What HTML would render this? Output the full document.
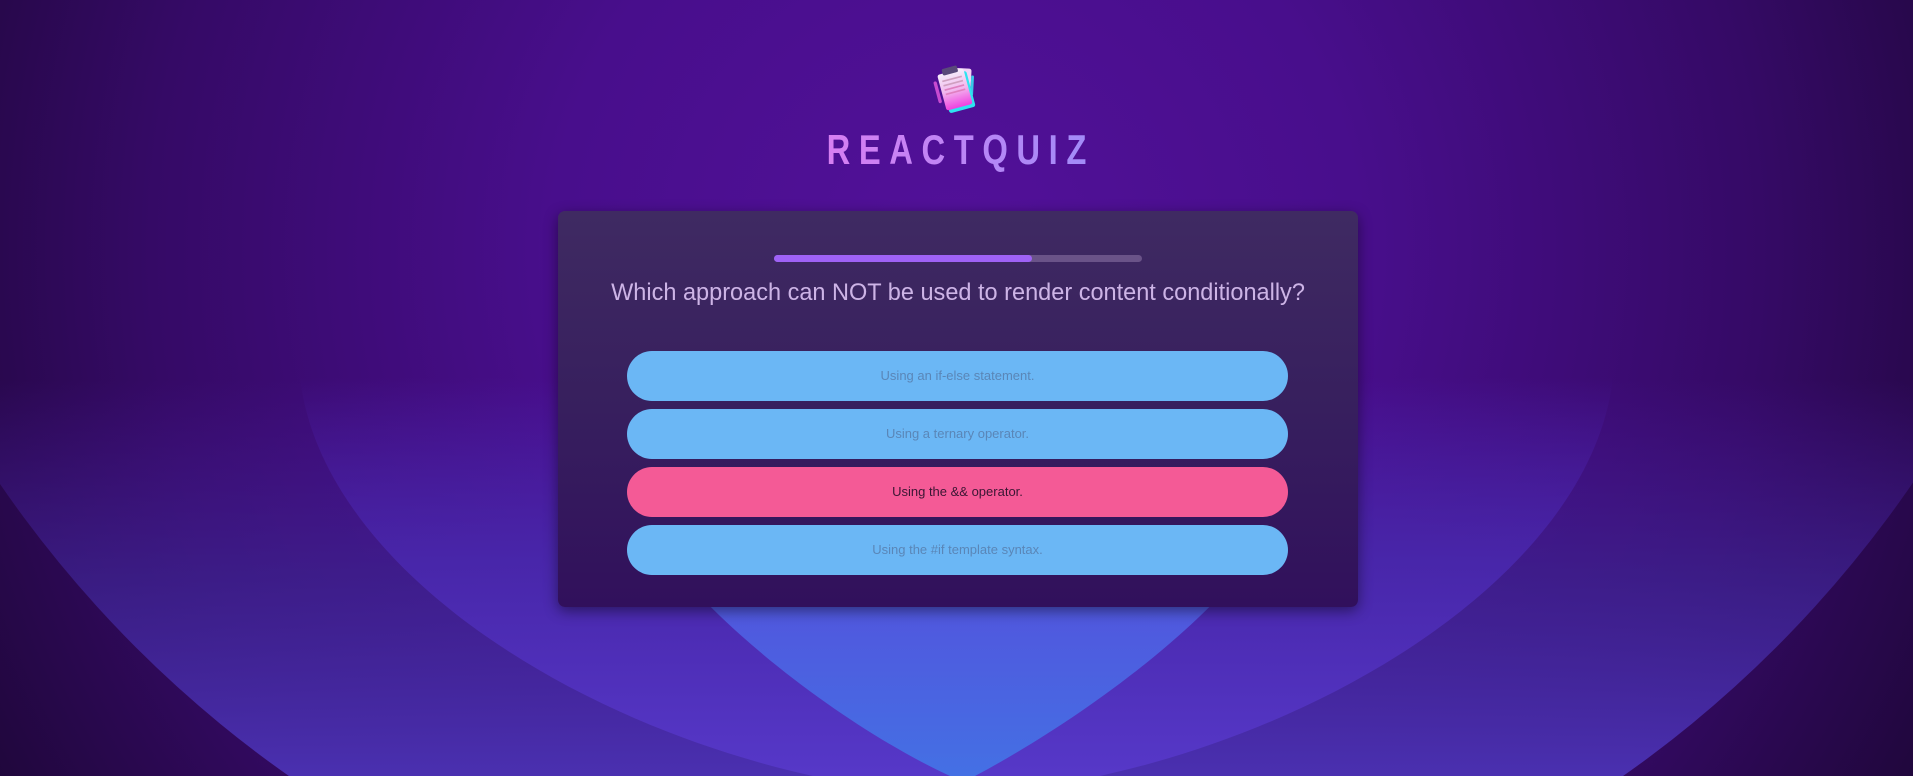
<!DOCTYPE html>
<html><head><style>
html,body{margin:0;width:1913px;height:776px;overflow:hidden;background:#3a0a6c}
body{position:relative;font-family:"Liberation Sans",sans-serif}
.bg{position:absolute;left:0;top:0;display:block}
.logo{position:absolute;left:930px;top:60px;width:56px;height:56px}
.tw{position:absolute;left:0;width:1913px;top:126px;height:56px;text-align:center;overflow:hidden}
.title{display:inline-block;font-size:42px;font-weight:bold;letter-spacing:11px;padding-left:11px;
background:linear-gradient(90deg,#d97ef2 0%,#a08cf8 100%);-webkit-background-clip:text;background-clip:text;color:transparent;transform:scaleX(.78);}
.card{position:absolute;left:558px;top:211px;width:800px;height:396px;border-radius:7px;
background:linear-gradient(180deg,#3f2a62 0%,#371f5e 50%,#31105c 100%);box-shadow:0 4px 14px rgba(0,0,0,.45)}
.bar{position:absolute;left:216px;top:44px;width:368px;height:7px;border-radius:4px;background:#6a5388}
.bar i{display:block;width:258px;height:7px;border-radius:4px;background:#9f62f6}
.q{position:absolute;left:0;width:800px;top:68px;text-align:center;font-size:24px;color:#cdb4e6;transform:scaleX(.98)}
.opt{position:absolute;left:69px;width:661px;height:50px;border-radius:25px;background:#6bb7f5;text-align:center;line-height:50px;font-size:13px;color:#5a86b7}
.opt.p{background:#f45a96;color:#3a1633}
</style></head><body>
<svg class="bg" width="1913" height="776" viewBox="0 0 1913 776">
<defs>
<radialGradient id="base" cx="956" cy="250" r="1150" gradientUnits="userSpaceOnUse">
<stop offset="0" stop-color="#521199"/><stop offset="0.35" stop-color="#480e8c"/><stop offset="0.7" stop-color="#350a66"/><stop offset="1" stop-color="#1c0634"/></radialGradient>
<linearGradient id="ga" x1="0" y1="380" x2="0" y2="776" gradientUnits="userSpaceOnUse">
<stop offset="0" stop-color="#4a1aa0" stop-opacity="0"/><stop offset="0.5" stop-color="#3f2495" stop-opacity=".7"/><stop offset="1" stop-color="#4a30b0"/></linearGradient>
<linearGradient id="gb" x1="0" y1="377" x2="0" y2="776" gradientUnits="userSpaceOnUse">
<stop offset="0" stop-color="#4d20b0" stop-opacity="0"/><stop offset="0.45" stop-color="#4a28b0" stop-opacity=".8"/><stop offset="1" stop-color="#5638c8"/></linearGradient>
<linearGradient id="gc" x1="0" y1="560" x2="0" y2="776" gradientUnits="userSpaceOnUse">
<stop offset="0" stop-color="#5450dc"/><stop offset="1" stop-color="#4470e4"/></linearGradient>
</defs>
<rect width="1913" height="776" fill="url(#base)"/>
<circle cx="956" cy="-173" r="1160" fill="url(#ga)"/>
<path d="M300,377 C320,560 560,720 813,776 L1100,776 C1353,720 1593,560 1613,377 Z" fill="url(#gb)"/>
<path d="M640,520 C700,620 850,730 950,776 L975,776 C1080,720 1220,620 1280,520 Z" fill="url(#gc)"/>
</svg>
<svg class="logo" viewBox="0 0 50 50">
<g transform="rotate(-15 25 25)">
<rect x="20" y="8" width="17" height="30" rx="2" fill="#f2d2f6" transform="rotate(18 28 23)"/>
<rect x="37" y="14" width="2.5" height="18" rx="1" fill="#38c8e8" transform="rotate(18 28 23)"/>
<rect x="12" y="12" width="24" height="33" rx="2" fill="#2ee4f0"/>
<rect x="10" y="9" width="24" height="33" rx="2" fill="url(#g)"/>
<rect x="15" y="5" width="14" height="6" rx="1.5" fill="#5a4a7a"/>
<rect x="13" y="15" width="18" height="1.5" fill="#d0a0c0"/>
<rect x="13" y="19" width="18" height="1.5" fill="#d0a0c0"/>
<rect x="13" y="23" width="18" height="1.5" fill="#e080c0"/>
<rect x="13" y="27" width="18" height="1.5" fill="#e080c0"/>
<rect x="5" y="14" width="3" height="20" rx="1.5" fill="#c84ad0"/>
</g>
<defs><linearGradient id="g" x1="0" y1="0" x2="0" y2="1"><stop offset="0" stop-color="#f6eefb"/><stop offset="0.5" stop-color="#f2b8ee"/><stop offset="1" stop-color="#f040e0"/></linearGradient></defs>
</svg>
<div class="tw"><span class="title">REACTQUIZ</span></div>
<div class="card">
<div class="bar"><i></i></div>
<div class="q">Which approach can NOT be used to render content conditionally?</div>
<div class="opt" style="top:140px">Using an if-else statement.</div>
<div class="opt" style="top:198px">Using a ternary operator.</div>
<div class="opt p" style="top:256px">Using the &amp;&amp; operator.</div>
<div class="opt" style="top:314px">Using the #if template syntax.</div>
</div>
</body></html>
